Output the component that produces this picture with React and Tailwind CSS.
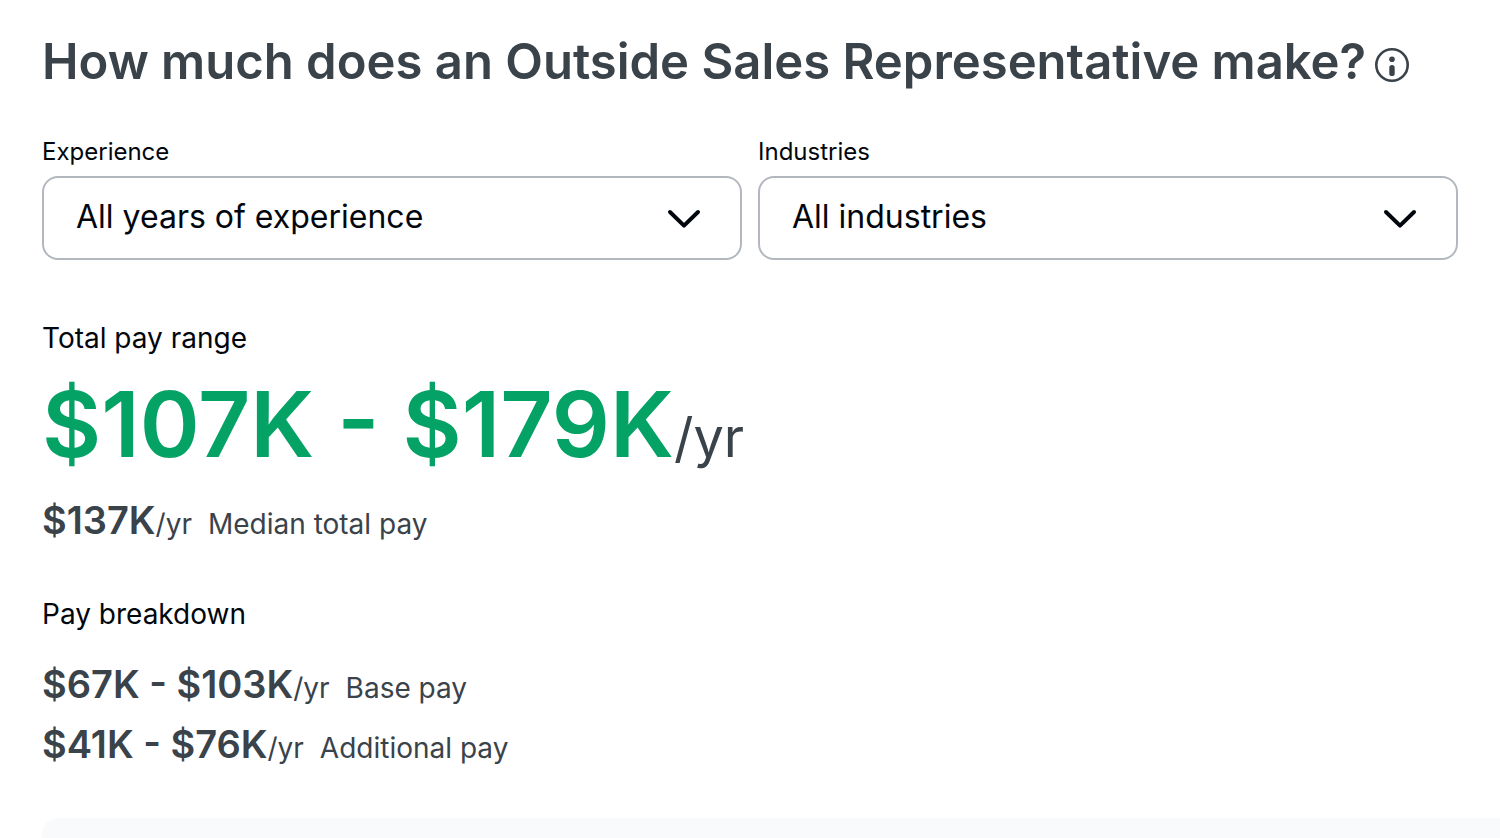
import { useState } from "react";

const experienceOptions = ["All years of experience", "0 - 1 years", "1 - 3 years", "4 - 6 years"];
const industryOptions = ["All industries", "Information Technology", "Manufacturing", "Retail"];

const breakdown = [
  { range: "$67K - $103K", label: "Base pay" },
  { range: "$41K - $76K", label: "Additional pay" },
];

function InfoIcon() {
  return (
    <svg viewBox="0 0 36 36" className="h-9 w-9" fill="none" aria-hidden="true">
      <circle cx="18" cy="18" r="15.7" stroke="currentColor" strokeWidth="2.6" />
      <circle cx="18" cy="12.3" r="2.8" fill="currentColor" />
      <path d="M18 20.8v5.6" stroke="currentColor" strokeWidth="5.4" strokeLinecap="round" />
    </svg>
  );
}

function SelectField({ id, label, options }) {
  const [value, setValue] = useState(options[0]);

  return (
    <div className="min-w-0 flex-1">
      <label htmlFor={id} className="block h-8 text-2xl leading-8">
        {label}
      </label>
      <div className="mt-2 grid items-center">
        <select
          id={id}
          value={value}
          onChange={(e) => setValue(e.target.value)}
          className="col-start-1 row-start-1 h-[84px] w-full appearance-none rounded-2xl border-2 border-[#b2b8be] bg-white px-8 pb-0.5 text-[32px]"
        >
          {options.map((option) => (
            <option key={option}>{option}</option>
          ))}
        </select>
        <svg
          viewBox="0 0 34 20"
          className="pointer-events-none col-start-1 row-start-1 mt-0.5 mr-[41px] h-5 w-[34px] justify-self-end"
          fill="none"
          aria-hidden="true"
        >
          <path d="M3 3l14 13.6L31 3" stroke="currentColor" strokeWidth="4" strokeLinecap="round" strokeLinejoin="round" />
        </svg>
      </div>
    </div>
  );
}

function PayRow({ amount, label }) {
  return (
    <p className="flex items-baseline text-[28px] leading-14 text-[#3a424a]">
      <span className="text-[38px] font-semibold">{amount}</span>
      <span>/yr</span>
      <span className="ml-4">{label}</span>
    </p>
  );
}

export default function App() {
  return (
    <main className="bg-white pt-8 pl-[42px] font-['Inter',sans-serif] text-[#02060d]">
      {/* HEADER */}
      <header className="flex items-center gap-2 text-[#3a424a]">
        <h1 className="text-[49px] leading-[60px] font-semibold">
          How much does an Outside Sales Representative make?
        </h1>
        <button type="button" aria-label="About this estimate" className="pt-1.5">
          <InfoIcon />
        </button>
      </header>

      {/* FILTERS */}
      <form className="mt-11 mr-[42px] flex gap-4">
        <SelectField id="experience" label="Experience" options={experienceOptions} />
        <SelectField id="industries" label="Industries" options={industryOptions} />
      </form>

      {/* TOTAL PAY */}
      <section className="mt-[58px]">
        <h2 className="text-[28px] leading-10">Total pay range</h2>
        <p className="mt-5 mb-2 flex items-baseline leading-[92px]">
          <span className="text-[91px] font-semibold text-[#04a265]">$107K - $179K</span>
          <span className="text-[54px] text-[#3a424a]">/yr</span>
        </p>
        <PayRow amount="$137K" label="Median total pay" />
      </section>

      {/* BREAKDOWN */}
      <section className="mt-[42px]">
        <h2 className="mb-[22px] text-[28px] leading-10">Pay breakdown</h2>
        {breakdown.map((row) => (
          <PayRow key={row.label} amount={row.range} label={row.label} />
        ))}
      </section>

      <div className="mt-[42px] h-5 rounded-tl-2xl bg-[#f9fafc]" />
    </main>
  );
}
